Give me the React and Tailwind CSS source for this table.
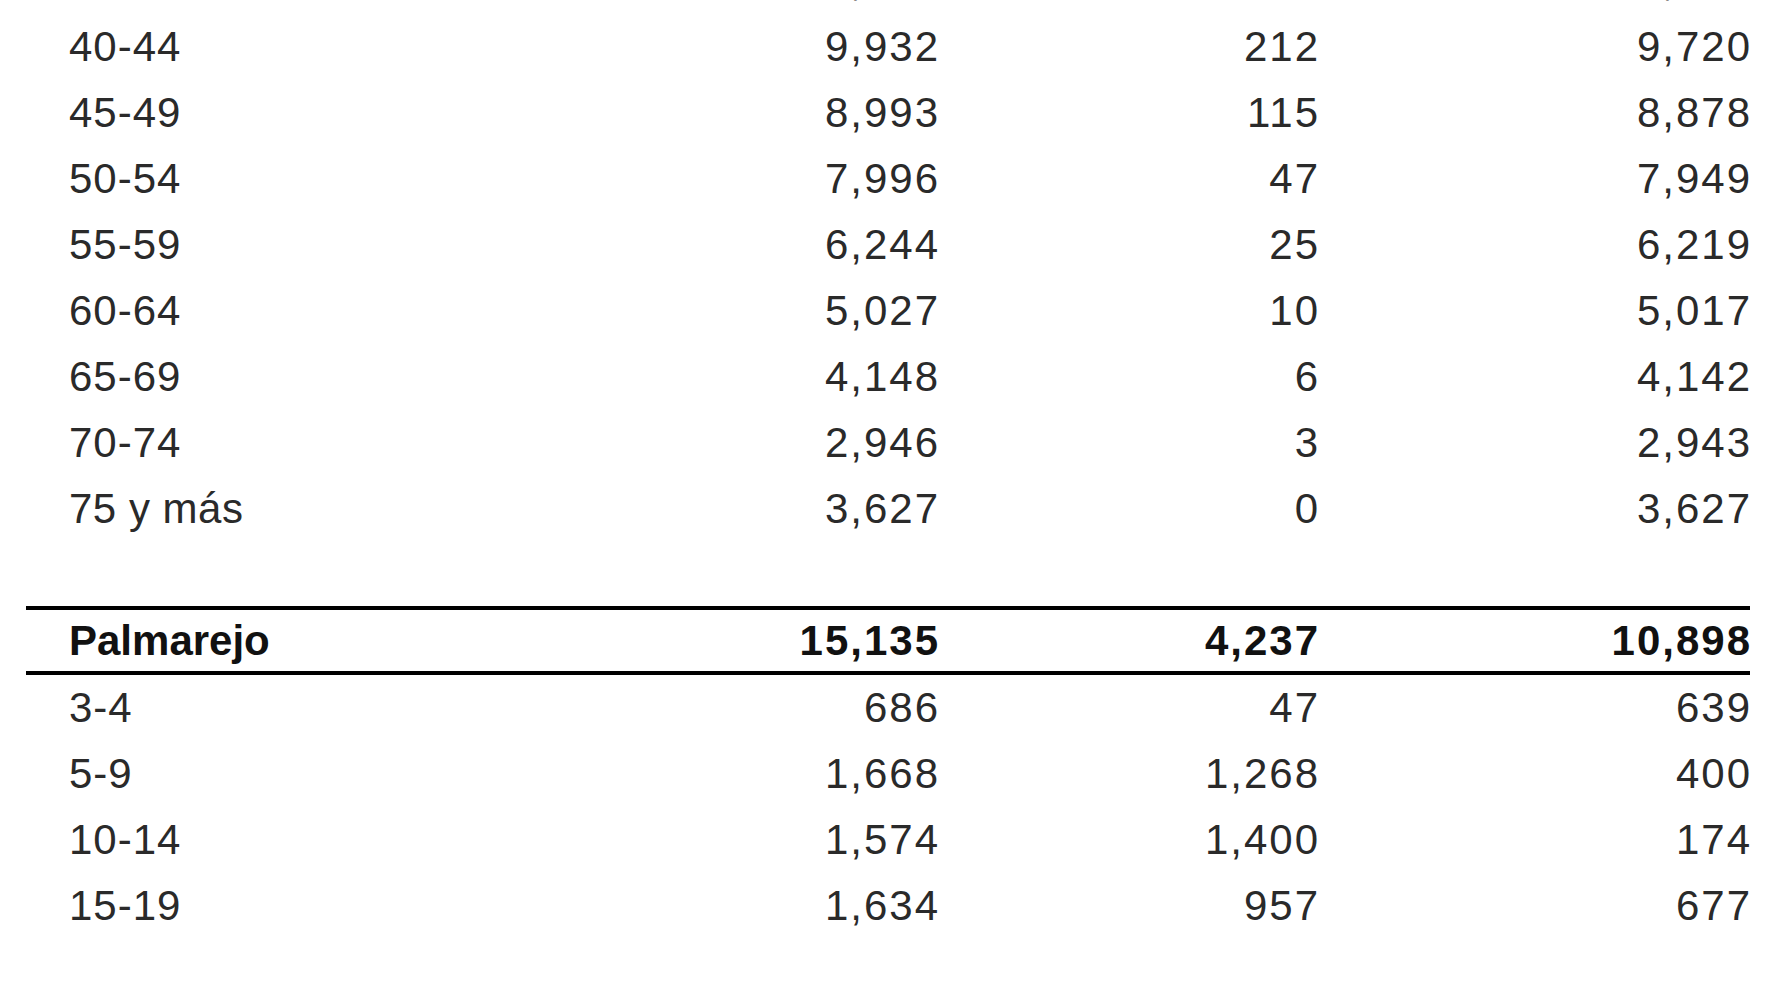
const rowsTop = [
  ["", "10,868", "", "10,415"],
  ["40-44", "9,932", "212", "9,720"],
  ["45-49", "8,993", "115", "8,878"],
  ["50-54", "7,996", "47", "7,949"],
  ["55-59", "6,244", "25", "6,219"],
  ["60-64", "5,027", "10", "5,017"],
  ["65-69", "4,148", "6", "4,142"],
  ["70-74", "2,946", "3", "2,943"],
  ["75 y más", "3,627", "0", "3,627"],
];

const rowsPalmarejo = [
  ["3-4", "686", "47", "639"],
  ["5-9", "1,668", "1,268", "400"],
  ["10-14", "1,574", "1,400", "174"],
  ["15-19", "1,634", "957", "677"],
];

function Row({ cells, bold, tall = "h-[66px]" }) {
  const labelTrack = bold ? "" : /^[\d-]+$/.test(cells[0]) ? "tracking-[1px]" : "tracking-[0.5px]";
  return (
    <div
      className={`grid grid-cols-[574px_338px_380px_432px] items-center ${tall} ${
        bold ? "font-bold text-[#111]" : "text-[#2a2a2a]"
      }`}
    >
      <div className={`pl-[43px] whitespace-nowrap ${labelTrack}`}>{cells[0]}</div>
      <div className="text-right tracking-[2px] -mr-[2px]">{cells[1]}</div>
      <div className="text-right tracking-[2px] -mr-[2px]">{cells[2]}</div>
      <div className="text-right tracking-[2px] -mr-[2px]">{cells[3]}</div>
    </div>
  );
}

export default function App() {
  return (
    <div
      className="w-full min-h-screen bg-white overflow-hidden text-[42px] leading-none"
      style={{ fontFamily: '"Liberation Sans", Arial, sans-serif' }}
    >
      <div className="ml-[26px] w-[1724px] -mt-[52px]">
        {/* first block, top row mostly above the fold */}
        {rowsTop.map((r, i) => (
          <Row key={i} cells={r} />
        ))}

        <div className="h-[64px]" />

        {/* Palmarejo */}
        <div className="border-t-4 border-b-4 border-black">
          <Row cells={["Palmarejo", "15,135", "4,237", "10,898"]} bold tall="h-[61px]" />
        </div>
        {rowsPalmarejo.map((r) => (
          <Row key={r[0]} cells={r} />
        ))}
      </div>
    </div>
  );
}
